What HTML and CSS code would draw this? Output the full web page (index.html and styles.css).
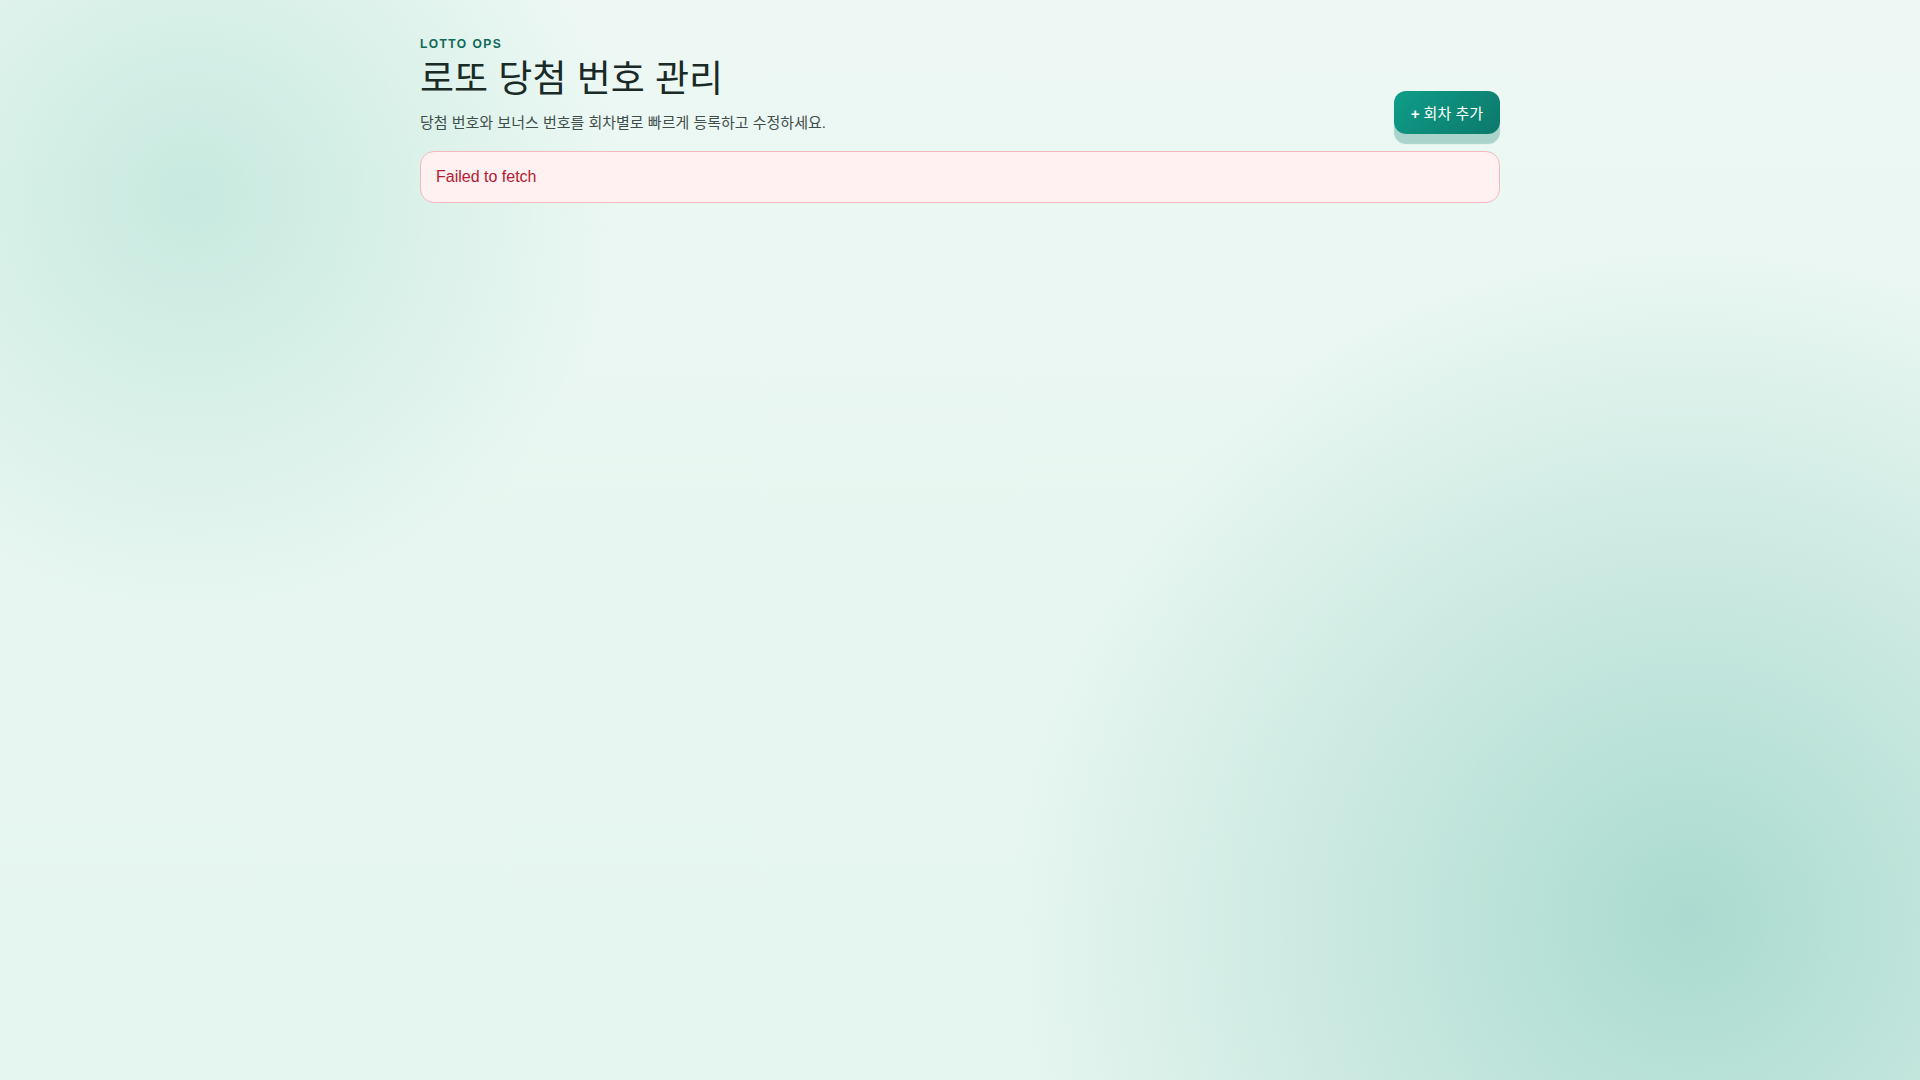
FILE: index.html
```html
<!DOCTYPE html>
<html lang="ko">
<head>
<meta charset="utf-8">
<title>로또 당첨 번호 관리</title>
<link rel="stylesheet" href="styles.css">
</head>
<body>
<main class="page">
  <header class="header">
    <div class="heading">
      <p class="eyebrow">LOTTO OPS</p>
      <h1 class="title">로또 당첨 번호 관리</h1>
      <p class="subtitle">당첨 번호와 보너스 번호를 회차별로 빠르게 등록하고 수정하세요.</p>
    </div>
    <button class="add-btn" type="button"><span class="plus">+</span> 회차 추가</button>
  </header>
  <div class="error">Failed to fetch</div>
</main>
</body>
</html>
```
FILE: styles.css
```css
html, body {
  margin: 0;
  padding: 0;
  min-height: 100%;
}
body {
  min-height: 100vh;
  font-family: "Liberation Sans", "Noto Sans CJK KR", sans-serif;
  color: #1c2b28;
  background:
    radial-gradient(circle at 88% 85%, rgba(160, 214, 202, 0.85) 0, rgba(160, 214, 202, 0) 35%),
    radial-gradient(circle at 10% 18%, rgba(190, 230, 218, 0.8) 0, rgba(190, 230, 218, 0) 22%),
    linear-gradient(180deg, #edf8f4 0%, #e7f6f0 60%, #e5f5ef 100%);
}
.page {
  max-width: 1080px;
  margin: 0 auto;
  padding: 36px 0 40px;
}
.header {
  display: flex;
  justify-content: space-between;
  align-items: flex-end;
  gap: 24px;
}
.eyebrow {
  margin: 0;
  font-size: 12px;
  font-weight: 700;
  letter-spacing: 0.12em;
  color: #0f6b58;
  line-height: 16px;
}
.title {
  margin: 4px 0 0;
  font-size: 37px;
  font-weight: 400;
  line-height: 48px;
  color: #1a2a27;
}
.subtitle {
  margin: 8px 0 0;
  font-size: 15px;
  line-height: 22px;
  color: #3f4e4b;
}
.add-btn {
  border: 0;
  border-radius: 12px;
  padding: 0 17px;
  height: 43px;
  font-family: inherit;
  font-size: 15px;
  font-weight: 400;
  color: #ffffff;
  background: linear-gradient(135deg, #0f9e88 0%, #0c786b 100%);
  box-shadow: 0 10px 1px rgba(20, 130, 112, 0.3);
  cursor: pointer;
  margin-bottom: 0;
}
.plus {
  font-weight: 700;
}
.error {
  margin-top: 17px;
  border: 1px solid #f3b9bd;
  background: #fff1f1;
  border-radius: 14px;
  padding: 0 15px;
  height: 50px;
  display: flex;
  align-items: center;
  font-size: 16px;
  color: #b2202f;
}
```
